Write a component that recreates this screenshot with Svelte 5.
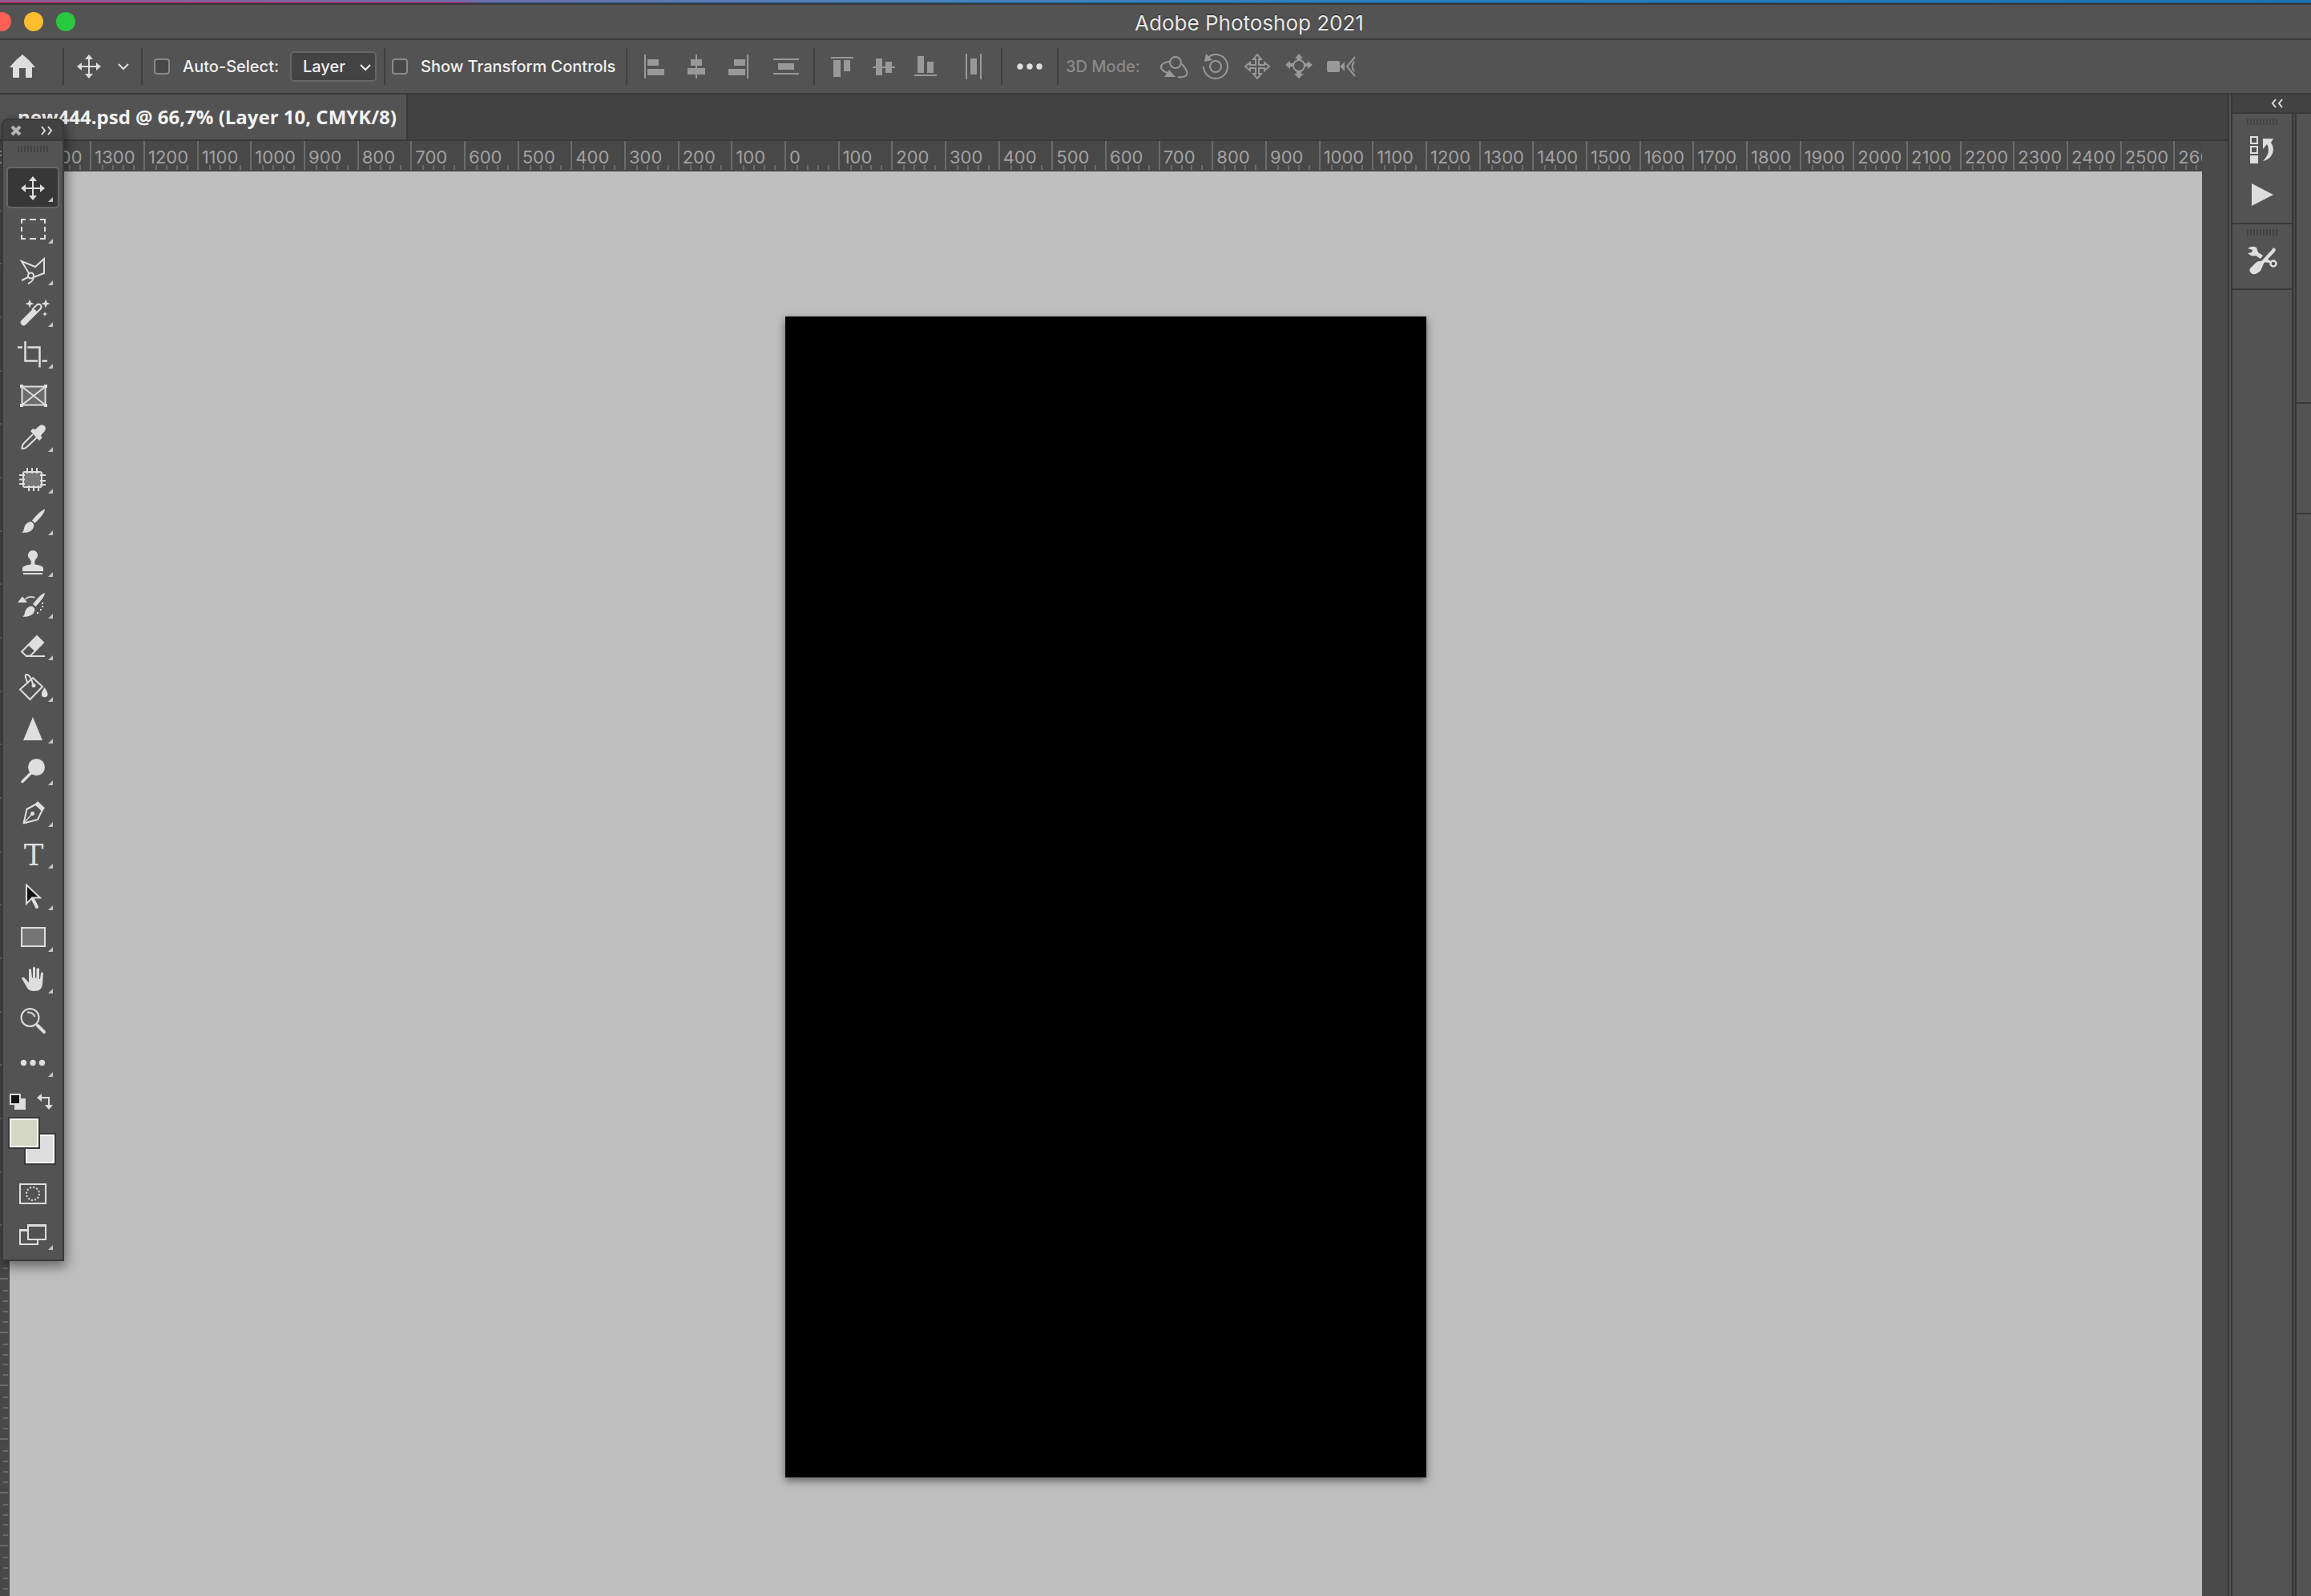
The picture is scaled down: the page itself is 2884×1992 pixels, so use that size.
<script>
  const F = 'fill="currentColor" stroke="none"';
  const moveIcon = (x, y) =>
    `<path d="M${x - 11} ${y}H${x + 11}M${x} ${y - 11}V${y + 11}"/><path ${F} d="M${x} ${y - 15}l5 6h-10zM${x} ${y + 15}l5-6h-10zM${x - 15} ${y}l6-5v10zM${x + 15} ${y}l-6-5v10z"/>`;

  // Tool glyphs share a 74 x 52 cell whose left edge is x = 4.
  const tools = [
    { name: 'Move', art: moveIcon(41, 27), active: true },
    { name: 'Rectangular Marquee', art: '<path d="M27 19V14H32M37 14H45M50 14H56V19M56 23V29M56 33V38H50M45 38H37M32 38H27V33M27 29V23"/>' },
    { name: 'Polygonal Lasso', art: '<path d="M36 29L27 14L44 21L55 11V29L42 34"/><circle cx="38.500" cy="32" r="3.500"/><path d="M27 38L35 34M35 42Q40 40 42 35"/>' },
    { name: 'Magic Wand', art: `<path d="M29.500 38.500L42 26" stroke-width="7.500" stroke-linecap="round"/><path d="M40 22.500L46 16.500Q49 14.500 51 17Q52.500 19.500 50 22L44 28"/><path ${F} d="M37 9.500l1.500 4 4 1.500-4 1.500-1.500 4-1.500-4-4-1.500 4-1.500zM57 9.500l1.500 4 4 1.500-4 1.500-1.500 4-1.500-4-4-1.500 4-1.500zM56 25l1 2.200 2.500.8-2.500.8-1 2.200-1-2.200-2.500-.8 2.500-.8z"/>` },
    { name: 'Crop', art: '<path stroke-width="2.500" d="M31.500 10V34.500H47M52.500 34.500H59M22 17.500H28M34.500 17.500H49.500V42.500"/>' },
    { name: 'Frame', art: `<rect x="27.500" y="14.500" width="29" height="23" fill="#6c6c6c"/><path d="M28 15L56 37M56 15L28 37"/><path ${F} d="M25 12h4v4h-4zM55 12h4v4h-4zM25 36h4v4h-4zM55 36h4v4h-4z"/>`, single: true },
    { name: 'Eyedropper', art: `<path d="M41 22L30 33Q27 36 27.500 40Q32 40 34 37.500L46 26"/><path ${F} d="M38 18l3-3 3 1 5-4.500q4-2.500 7 .5q2 3-.5 6.500l-4.500 5 1.500 3-3.500 3.500z"/>` },
    { name: 'Patch', art: '<rect x="29" y="17" width="23" height="19" rx="2" fill="#777"/><path d="M34 12V19M40 12V19M46 12V19M36 34V41M42 34V41M48 34V41M24 21H31M24 26.500H31M24 32H31M50 21H57M50 28H57M50 33H57"/>' },
    { name: 'Brush', art: `<path ${F} d="M56 11.500Q51 12.500 40 25.500L43.500 29Q56 17 56 11.500zM38.500 27Q42 28.500 42.500 32Q41 41.500 27.500 41Q30 38 30.500 33.500Q33 27.500 38.500 27z"/>` },
    { name: 'Clone Stamp', art: `<path ${F} d="M41 11a6 6 0 0 1 4 10.500Q42.500 24 43.500 28.500Q54 30 54 33V37H28V33Q28 30 38.500 28.500Q39.500 24 37 21.500A6 6 0 0 1 41 11z"/><path d="M29 40H53"/>` },
    { name: 'History Brush', art: `<path ${F} d="M56 12Q51 13 41 26L44.500 29Q56 17 56 12zM39.500 28.500Q43 29.500 43.500 33Q42 42 28.500 42Q31 39 31.500 34.500Q34 29 39.500 28.500zM22 24L28 16.500L34 24z"/><path stroke-width="1.500" d="M31 20Q37 15 43.500 18"/><path ${F} d="M52 24h2v2h-2zM52 28h2v2h-2zM50 32h2v2h-2zM46 36h2v2h-2z"/>` },
    { name: 'Eraser', art: `<path d="M46 14L54 22L38 38.500H32.500L27 33.500zM32 39H56"/><path ${F} d="M46 13.500L54.500 21.500L43.500 33L35 25z"/>` },
    { name: 'Paint Bucket', art: `<path d="M41 14L53 25L37.500 41L25 28.500z"/><path d="M35 21Q29 9 34 10Q38 11 41.500 23"/><circle ${F} cx="42" cy="23.500" r="2.500"/><path ${F} d="M55.500 26q4 5.500 4 8.500a3.800 3.800 0 0 1-7.600 0q0-3 3.600-8.500z"/>` },
    { name: 'Sharpen', art: `<path ${F} d="M41 11L53 40H29z"/>` },
    { name: 'Dodge', art: `<circle ${F} cx="45.500" cy="21.500" r="10.500"/><path stroke-width="3.500" stroke-linecap="round" d="M28 39.500L39 28.500"/>` },
    { name: 'Pen', art: `<path stroke-linejoin="round" d="M29.500 39.500L33.500 22L44.500 16L52.500 23.500L47 35z"/><path ${F} d="M47 12L56 20.500L53 24.500L43.500 15.500z"/><path stroke-width="1.500" d="M30 39L40 28"/><circle ${F} cx="40.500" cy="27.500" r="2.500"/>` },
    { name: 'Type', letter: 'T' },
    { name: 'Path Selection', art: `<path stroke-width="4" stroke-linecap="round" d="M41 30L46 40"/><path fill="#111" d="M33 12.500V36L40 28.500H50z"/>` },
    { name: 'Rectangle', art: '<rect x="27" y="14" width="29" height="23" fill="#757575"/>' },
    { name: 'Hand', art: `<path ${F} d="M27 25Q29 22.500 31.500 25.500L36 30.500V14.500Q37.500 11.500 39 14.500L40 24.500H41V12Q42.500 9 44 12V24.500H45.500V13.500Q47.500 11 49 13.500V26H50L51 18.500Q53 16.500 54 18.500L53 32Q52.500 41 43 41Q36 41 34 37z"/>` },
    { name: 'Zoom', art: '<circle cx="37.500" cy="22" r="11"/><path d="M34 15.500Q41 15 43.500 21"/><path stroke-width="4" stroke-linecap="round" d="M47 32L55 40"/>', single: true },
    { name: 'Edit Toolbar', art: `<g ${F}><circle cx="29.500" cy="26.500" r="3.700"/><circle cx="41" cy="26.500" r="3.700"/><circle cx="52.500" cy="26.500" r="3.700"/></g>` }
  ];

  const modes = [
    { name: 'Quick Mask', art: '<rect x="25" y="14" width="32" height="24"/><circle cx="41" cy="26" r="8" stroke-dasharray="2 2.190"/>', single: true },
    { name: 'Screen Mode', art: '<path d="M34 19H25V37H47V32M25 20H34"/><rect x="35" y="13" width="22" height="18"/><path stroke-width="3" d="M34 13.500H58M24 19.500H34"/>' }
  ];

  // Option-bar glyphs are drawn around the origin.
  const alignX = [
    ['Align left edges', `<path d="M-12-15V15"/><path ${F} d="M-9-9H5V-1H-9zM-9 3H12V11H-9z"/>`],
    ['Align horizontal centers', `<path d="M0-15V15"/><path ${F} d="M-7-9H7V-1H-7zM-11 2H11V10H-11z"/>`],
    ['Align right edges', `<path d="M12-15V15"/><path ${F} d="M-5-9H9V-1H-5zM-12 3H9V11H-12z"/>`],
    ['Distribute vertically', `<path d="M-16-9H16M-16 9H16"/><path ${F} d="M-10-4H10V4H-10z"/>`]
  ];
  const alignY = [
    ['Align top edges', `<path d="M-14-11H14"/><path ${F} d="M-11-8H-2V13H-11zM2-8H10V6H2z"/>`],
    ['Align vertical centers', `<path d="M-14 1H14"/><path ${F} d="M-10-10H-2V11H-10zM2-6H10V8H2z"/>`],
    ['Align bottom edges', `<path d="M-14 11H14"/><path ${F} d="M-10-13H-2V8H-10zM2-6H10V8H2z"/>`],
    ['Distribute horizontally', `<path d="M-9-16V16M9-16V16"/><path ${F} d="M-4-10H4V10H-4z"/>`]
  ];
  const arrow4 = 'M0-15L5-9H2V-2H9V-5L15 0L9 5V2H2V9H5L0 15L-5 9H-2V2H-9V5L-15 0L-9-5V-2H-2V-9H-5z';
  const modes3d = [
    ['Orbit', `<circle cx="2" cy="-5" r="7"/><path d="M-5-6Q-17-5-16 2Q-14 6-8 8M10-3Q18 6 16 10Q14 14 5 13"/><path ${F} d="M-12 13L-6 4L2 13z"/>`],
    ['Roll', `<circle cx="0" cy="0" r="7"/><path d="M-15 0A15 15 0 1 0 0-15Q-6-15-10-10"/><path ${F} d="M-14-6L-12-16L-4-8z"/>`],
    ['Pan', `<path d="${arrow4}"/>`],
    ['Slide', `<circle cx="0" cy="-1" r="7"/><path ${F} d="M0-16L5-10H2V-7H-2V-10H-5zM0 15L6 9H3V6H-3V9H-6zM-17-2L-11-7V-4H-7V0H-11V3zM17-2L11-7V-4H7V0H11V3z"/>`],
    ['Camera', `<path ${F} d="M-17-5Q-17-7-15-7H-3Q-1-7-1-5V5Q-1 7-3 7H-15Q-17 7-17 5zM-1 0L5-6V6z"/><path d="M18-12L8 0L18 12M17-6Q12 0 17 6"/>`]
  ];

  const topMarks = Array.from({ length: 42 }, (_, i) => Math.abs(i - 15) * 100);
  const sideMarks = Array.from({ length: 27 }, (_, i) => i);
  const minor = [1, 2, 3, 4];

  let autoSelect = $state(false);
  let showTransform = $state(false);
</script>

{#snippet optionIcon(label, art)}
  <button class="opt" aria-label={label}>
    <svg width="40" height="40" viewBox="-20 -20 40 40">{@html art}</svg>
  </button>
{/snippet}

{#snippet toolButton(t)}
  <button class="tool" class:active={t.active} aria-label={t.name}>
    <svg width="74" height="52" viewBox="4 0 74 52">
      {#if t.active}<rect class="well" x="9" y="1" width="64" height="50" rx="4" />{/if}
      {#if t.letter}<text class="letter" x="42" y="40" text-anchor="middle">{t.letter}</text>{:else}{@html t.art}{/if}
      {#if !t.single}<path class="corner" d="M66 38v6h-6z" />{/if}
    </svg>
  </button>
{/snippet}

<div class="window">
  <div class="desktop"><div class="edge"></div></div>
  <header class="title">
    <div class="lights">
      <button class="light red" aria-label="Close"></button>
      <button class="light amber" aria-label="Minimize"></button>
      <button class="light green" aria-label="Zoom window"></button>
    </div>
    <h1>Adobe Photoshop 2021</h1>
  </header>

  <div class="options">
    <div class="group home">
      <button aria-label="Home">
        <svg width="32" height="30" viewBox="0 0 32 30"><path fill="currentColor" stroke="none" d="M16 0L24 7L32 16H28V28Q28 29 27 29H20V17H12V29H5Q4 29 4 28V16H0L8 7z" /></svg>
      </button>
    </div>
    <div class="group current">
      <button aria-label="Current tool">
        <svg width="32" height="32" viewBox="0 0 32 32">{@html moveIcon(16, 16)}</svg>
      </button>
      <button aria-label="Tool presets">
        <svg width="16" height="12" viewBox="0 0 16 12"><path d="M2 3L8 9L14 3" /></svg>
      </button>
    </div>
    <div class="group auto">
      <label><input type="checkbox" bind:checked={autoSelect} />Auto-Select:</label>
      <span class="picker">
        <select aria-label="Auto-select target"><option>Layer</option><option>Group</option></select>
        <svg width="16" height="12" viewBox="0 0 16 12"><path d="M2 3L8 9L14 3" /></svg>
      </span>
    </div>
    <div class="group transform">
      <label><input type="checkbox" bind:checked={showTransform} />Show Transform Controls</label>
    </div>
    <div class="group align">
      {#each alignX as [label, art]}{@render optionIcon(label, art)}{/each}
    </div>
    <div class="group align">
      {#each alignY as [label, art]}{@render optionIcon(label, art)}{/each}
    </div>
    <div class="group more">
      <button aria-label="More options">
        <svg width="32" height="8" viewBox="0 0 32 8"><g fill="currentColor" stroke="none"><circle cx="4" cy="4" r="3.700" /><circle cx="16" cy="4" r="3.700" /><circle cx="28" cy="4" r="3.700" /></g></svg>
      </button>
    </div>
    <div class="group three">
      <span>3D Mode:</span>
      {#each modes3d as [label, art]}{@render optionIcon(label, art)}{/each}
    </div>
  </div>

  <div class="body">
    <main class="document">
      <nav class="tabs">
        <a class="tab" href="#document">new444.psd @ 66,7% (Layer 10, CMYK/8)</a>
      </nav>
      <div class="view">
        <div class="ruler">
          <div class="scale">
            {#each topMarks as mark}
              <div class="mark">
                <span>{mark}</span>
                {#each minor as m}<i class="m{m}"></i>{/each}
              </div>
            {/each}
          </div>
        </div>
        <div class="lower">
          <div class="side">
            <div class="side-scale">
              {#each sideMarks as s (s)}
                <div class="side-mark">{#each minor as m}<i class="s{m}"></i>{/each}</div>
              {/each}
            </div>
          </div>
          <div class="canvas"><div class="artboard"></div></div>
        </div>
      </div>
    </main>

    <aside class="dock">
      <div class="dock-head">
        <button aria-label="Expand panels">
          <svg width="16" height="12" viewBox="0 0 16 12"><path d="M6 1L2 6L6 11M14 1L10 6L14 11" /></svg>
        </button>
      </div>
      <div class="dock-columns">
        <div class="strip">
          <section class="history">
            <div class="grip"></div>
            <button aria-label="History">
              <svg width="32" height="36" viewBox="0 0 32 36"><path d="M2 2H10V10H2zM2 14H10V22H2z" /><path fill="currentColor" stroke="none" d="M1 25H11V35H1zM17 4L30 4L27 9Q33 17 27 26Q23 31 17 32Q24 25 24 18Q24 14 22 11L17 17z" /></svg>
            </button>
            <button aria-label="Actions">
              <svg width="32" height="28" viewBox="0 0 32 28"><path fill="currentColor" stroke="none" d="M3 0L30 14L3 28z" /></svg>
            </button>
          </section>
          <section class="presets">
            <div class="grip"></div>
            <button aria-label="Tool presets panel">
              <svg width="38" height="36" viewBox="0 0 38 36"><path fill="currentColor" stroke="none" d="M1 3Q7-1 12 2L14 8L20 12L17 16L11 12Q6 14 1 9L6 8L7 5zM24 17L27 16L25 21L23 20zM33 2L36 4L35 7L21 22L17 31Q12 36 7 35Q2 32 4 28L11 21Q15 18 18 19L31 5z" /><path stroke-width="3" d="M24 18L29 20" /><circle cx="33" cy="22" r="3.500" stroke-width="2.500" /></svg>
            </button>
          </section>
        </div>
        <div class="outer">
          <div class="slot first"></div>
          <div class="slot second"></div>
        </div>
      </div>
    </aside>
  </div>

  <aside class="toolbox" aria-label="Tools">
    <div class="box-head">
      <button aria-label="Close tools"><svg width="16" height="14" viewBox="0 0 16 14"><path stroke-width="4" d="M3 2L13 12M13 2L3 12" /></svg></button>
      <button aria-label="Two columns"><svg width="16" height="12" viewBox="0 0 16 12"><path d="M2 1L6 6L2 11M10 1L14 6L10 11" /></svg></button>
    </div>
    <div class="grip"></div>
    <div class="tools">
      {#each tools as t}{@render toolButton(t)}{/each}
    </div>
    <div class="mini">
      <button aria-label="Default colors"><svg width="20" height="20" viewBox="0 0 20 20"><path fill="currentColor" stroke="none" d="M6 6H20V20H6z" /><rect x="1" y="1" width="12" height="12" fill="#111" /></svg></button>
      <button aria-label="Swap colors"><svg width="20" height="20" viewBox="0 0 20 20"><path d="M5 5H15V15" /><path fill="currentColor" stroke="none" d="M0 5L6 0V10zM15 20L10 14H20z" /></svg></button>
    </div>
    <div class="swatches">
      <button class="swatch back" aria-label="Background color"></button>
      <button class="swatch front" aria-label="Foreground color"></button>
    </div>
    {#each modes as t}{@render toolButton(t)}{/each}
  </aside>
</div>

<style>
  :global(body) { background: #535353; }
  .window {
    position: relative;
    display: flex;
    flex-direction: column;
    height: 100vh;
    overflow: hidden;
    background: #535353;
    color: #f0f0f0;
    font: 500 20px/24px Inter, "Liberation Sans", sans-serif;
  }
  .window * { box-sizing: border-box; }
  button {
    display: flex;
    align-items: center;
    justify-content: center;
    margin: 0;
    padding: 0;
    border: 0;
    background: none;
    color: #dedede;
  }
  svg { display: block; fill: none; stroke: currentColor; stroke-width: 2; }

  .desktop {
    flex: none;
    height: 6px;
    background: linear-gradient(90deg, #94588f, #6f6aa8 20%, #4a7fb8 38%, #2680c0 60%, #1874b4);
    border-bottom: 2px solid #383838;
  }
  .edge {
    height: 4px;
    background: linear-gradient(90deg, #a02050 20%, #205a80 21%) bottom / 100% 1px no-repeat;
  }

  .title {
    flex: none;
    display: flex;
    align-items: center;
    height: 44px;
    border-bottom: 2px solid #3a3a3a;
  }
  .lights { display: flex; gap: 16px; width: 234px; margin-left: -10px; }
  .light { width: 24px; height: 24px; border-radius: 50%; }
  .red { background: #ff5f57; }
  .amber { background: #febc2e; }
  .green { background: #28c840; }
  h1 {
    flex: 1;
    margin: 0;
    padding: 3px 0 0 10px;
    text-align: center;
    font-size: 26px;
    line-height: 32px;
    font-weight: 400;
    color: #e8e8e8;
    text-shadow: 0 -1px 1px #222;
  }

  .options {
    flex: none;
    display: flex;
    align-items: center;
    height: 68px;
    border-bottom: 2px solid #383838;
  }
  .group {
    display: flex;
    align-items: center;
    height: 46px;
    border-right: 2px solid #3f3f3f;
  }
  .home { width: 80px; padding-left: 12px; }
  .current { width: 98px; padding-left: 15px; gap: 19px; }
  .auto { width: 303px; padding-left: 14px; justify-content: space-between; padding-right: 9px; }
  .transform { width: 302px; padding-left: 8px; }
  .align { width: 234px; padding-left: 8px; }
  .more { width: 70px; justify-content: center; }
  .three { border: 0; padding-left: 9px; }
  .three span { width: 109px; color: #8a8a8a; }
  .opt { width: 52px; height: 46px; color: #999; }
  .align .opt:last-child { width: 68px; }
  label { display: flex; align-items: center; gap: 16px; white-space: nowrap; }
  input {
    appearance: none;
    width: 20px;
    height: 20px;
    margin: 0;
    border: 2px solid #8a8a8a;
    border-radius: 4px;
    background: #484848;
  }
  input:checked { background: #dedede; }
  .picker { position: relative; display: block; }
  .picker svg { position: absolute; right: 6px; top: 14px; pointer-events: none; }
  select {
    appearance: none;
    display: block;
    width: 108px;
    height: 38px;
    padding: 0 14px;
    border: 2px solid #666;
    border-radius: 5px;
    background: #434343;
    color: inherit;
    font: inherit;
  }

  .body { flex: 1; display: flex; min-height: 0; }
  .document {
    flex: 1;
    min-width: 0;
    display: flex;
    flex-direction: column;
    border-right: 2px solid #383838;
    background: #4a4a4a;
  }
  .tabs {
    flex: none;
    display: flex;
    height: 58px;
    background: #424242;
    border-bottom: 2px solid #383838;
  }
  .tab {
    padding: 12px 12px 0 22px;
    border-right: 2px solid #383838;
    background: #535353;
    color: #f2f2f2;
    font: 700 24px/32px "Open Sans", "Noto Sans", sans-serif;
    text-decoration: none;
    white-space: nowrap;
  }
  .view { flex: 1; display: flex; flex-direction: column; min-height: 0; margin-right: 32px; }
  .ruler { flex: none; height: 38px; overflow: hidden; background: #484848; }
  .scale {
    display: grid;
    grid-template-columns: repeat(42, 1fr);
    width: 2800px;
    height: 36px;
    margin-left: -21px;
  }
  .mark {
    display: grid;
    grid-template-columns: repeat(5, 1fr);
    grid-template-rows: 30px 6px;
    min-width: 0;
    border-left: 2px solid #6c6c6c;
  }
  .mark span {
    grid-row: 1 / 3;
    grid-column: 1 / 6;
    width: 0;
    padding-left: 4px;
    color: #a2a2a2;
    font-size: 22px;
    line-height: 40px;
    font-weight: 400;
  }
  .mark i { grid-row: 2; border-left: 2px solid #6c6c6c; }
  .m1 { grid-column: 2; }
  .m2 { grid-column: 3; }
  .m3 { grid-column: 4; }
  .m4 { grid-column: 5; }

  .lower { flex: 1; display: flex; min-height: 0; }
  .side { flex: none; width: 12px; overflow: hidden; background: #484848; }
  .side-scale {
    display: grid;
    grid-template-rows: repeat(27, 1fr);
    height: 1800px;
    margin-top: -19px;
  }
  .side-mark {
    display: grid;
    grid-template-rows: repeat(5, 1fr);
    width: 10px;
    min-height: 0;
    border-top: 2px solid #6c6c6c;
  }
  .side-mark i { margin-left: 4px; border-top: 2px solid #6c6c6c; }
  .s1 { grid-row: 2; }
  .s2 { grid-row: 3; }
  .s3 { grid-row: 4; }
  .s4 { grid-row: 5; }
  .canvas {
    flex: 1;
    display: flex;
    justify-content: center;
    align-items: flex-start;
    padding-top: 181px;
    overflow: hidden;
    background: #bfbfbf;
  }
  .artboard {
    flex: none;
    width: 800px;
    height: 1449px;
    background: #000;
    box-shadow: 0 4px 10px rgba(0, 0, 0, 0.5);
  }

  .dock {
    flex: none;
    width: 100px;
    display: flex;
    flex-direction: column;
    margin-left: 2px;
    border-left: 2px solid #383838;
  }
  .dock-head {
    flex: none;
    height: 24px;
    display: flex;
    align-items: center;
    padding-left: 48px;
    background: #424242;
    border-bottom: 2px solid #383838;
  }
  .dock-columns { flex: 1; display: flex; gap: 2px; background: #484848; }
  .strip { width: 76px; background: #535353; border-right: 2px solid #383838; }
  section {
    display: flex;
    flex-direction: column;
    align-items: center;
    padding-top: 6px;
    border-bottom: 2px solid #383838;
  }
  .history { height: 138px; }
  .history button { margin-top: 13px; }
  .history button + button { margin-top: 24px; }
  .presets { height: 82px; }
  .presets button { margin-top: 13px; }
  .grip {
    width: 38px;
    height: 8px;
    background: repeating-linear-gradient(90deg, #424242 0 2px, transparent 2px 4px);
  }
  .outer { flex: 1; background: #535353; border-left: 2px solid #383838; }
  .slot { border-bottom: 2px solid #383838; }
  .first { height: 362px; }
  .second { height: 138px; }

  .toolbox {
    position: absolute;
    left: 2px;
    top: 148px;
    width: 78px;
    padding-bottom: 4px;
    border: 2px solid #393939;
    border-radius: 8px 8px 0 0;
    background: #535353;
    box-shadow: 2px 6px 16px rgba(0, 0, 0, 0.5);
  }
  .box-head {
    display: flex;
    align-items: center;
    justify-content: space-between;
    height: 26px;
    padding: 2px 12px 0 8px;
    border-radius: 6px 6px 0 0;
    border-bottom: 2px solid #393939;
    background: #424242;
  }
  .box-head button:first-child { color: #b4b4b4; }
  .toolbox .grip { margin: 6px 0 18px 18px; }
  .well { fill: #373737; stroke: #666; }
  .corner { fill: #c8c8c8; stroke: none; }
  .letter { fill: currentColor; stroke: none; font: 37px "DejaVu Serif", serif; }
  .mini { display: flex; gap: 14px; height: 42px; padding: 13px 0 0 8px; align-items: flex-start; }
  .swatches { position: relative; height: 70px; }
  .swatch {
    position: absolute;
    width: 40px;
    height: 40px;
    border: 2px solid #383838;
    box-shadow: inset 0 0 0 2px #fff;
  }
  .front { left: 6px; top: 0; background: #d4d7c5; }
  .back { left: 26px; top: 20px; background: #dedddd; }
</style>
